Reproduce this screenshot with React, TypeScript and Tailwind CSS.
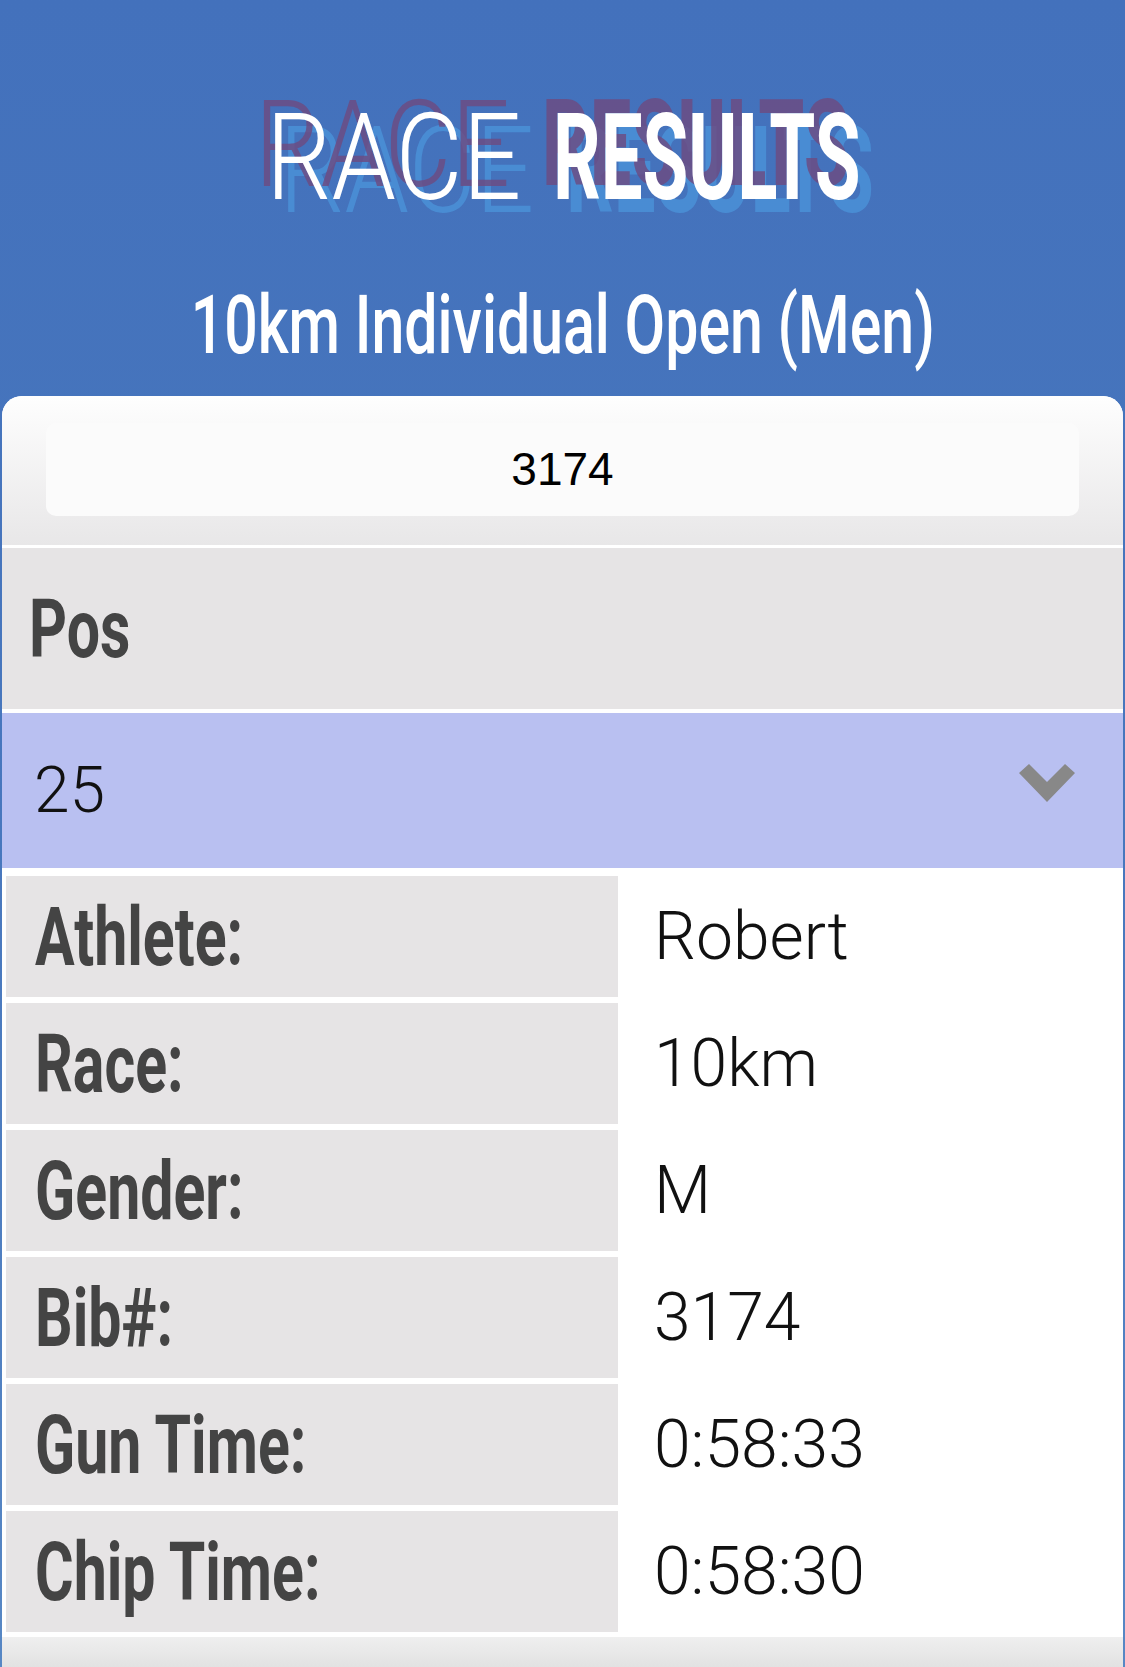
const rows = [
  { label: "Athlete:", value: "Robert" },
  { label: "Race:", value: "10km" },
  { label: "Gender:", value: "M" },
  { label: "Bib#:", value: "3174" },
  { label: "Gun Time:", value: "0:58:33" },
  { label: "Chip Time:", value: "0:58:30" },
];

export default function App() {
  return (
    <div className="min-h-[1667px] w-full bg-linear-to-b from-[#4371bc] via-[#4877bd] to-[#5787c4] font-['Roboto',sans-serif]">
      {/* Header */}
      <div className="pt-[98px]">
        <h1 className="mx-auto flex w-fit gap-[35px] text-white">
          <div className="w-[252px]">
            <span className="inline-block origin-left scale-x-[0.86] whitespace-nowrap text-[120px] font-light leading-none [text-shadow:-13px_-13px_0_rgba(110,74,128,0.8),15px_13px_0_rgba(75,146,216,0.8)]">
              RACE
            </span>
          </div>
          <div className="w-[306px]">
            <span className="inline-block origin-left scale-x-[0.62] whitespace-nowrap text-[120px] font-bold leading-none [text-shadow:-18px_-14px_0_rgba(110,74,128,0.8),21px_13px_0_rgba(75,146,216,0.8)]">
              RESULTS
            </span>
          </div>
        </h1>

        <h2 className="mt-[66px] text-center">
          <span className="inline-block scale-x-[0.72] whitespace-nowrap text-[82px] font-medium leading-none text-white">
            10km Individual Open (Men)
          </span>
        </h2>
      </div>

      {/* Results card */}
      <div className="mx-[2px] mt-[30px] overflow-hidden rounded-t-[20px] bg-white">
        <div className="bg-linear-to-b from-[#fefefe] to-[#e8e7e8] px-[44px] pb-[29px] pt-[27px]">
          <div className="flex h-[93px] items-center justify-center rounded-[10px] bg-[#fbfbfb] font-['Liberation_Sans',sans-serif] text-[46px] text-black">
            3174
          </div>
        </div>

        <div className="flex h-[164px] items-center border-t-[3px] border-white bg-[#e6e4e5] pl-[27px]">
          <span className="inline-block origin-left scale-x-[0.72] text-[82px] font-bold leading-none text-[#444]">
            Pos
          </span>
        </div>

        <div className="flex h-[159px] items-center justify-between border-t-[4px] border-white bg-[#b9c0f1] pl-[32px] pr-[48px]">
          <span className="text-[64px] font-light leading-none text-[#111]">
            25
          </span>
          <svg width="56" height="38" viewBox="0 0 56 38" className="mb-[16px]">
            <polygon points="0,9 10,0 28,18 46,0 56,9 28,38" fill="#888888" />
          </svg>
        </div>

        <div className="flex flex-col gap-[6px] px-[4px] pb-[5px] pt-[8px]">
          {rows.map((row) => (
            <div key={row.label} className="flex h-[121px]">
              <div className="flex w-[612px] items-center bg-[#e6e4e5] pl-[29px]">
                <span className="inline-block origin-left scale-x-[0.72] whitespace-nowrap text-[82px] font-bold leading-none text-[#444]">
                  {row.label}
                </span>
              </div>
              <div className="flex items-center pl-[36px]">
                <span className="text-[66px] font-light leading-none text-[#111]">
                  {row.value}
                </span>
              </div>
            </div>
          ))}
        </div>

        <div className="h-[30px] bg-linear-to-b from-[#efefef] to-[#e2e2e2]" />
      </div>
    </div>
  );
}
